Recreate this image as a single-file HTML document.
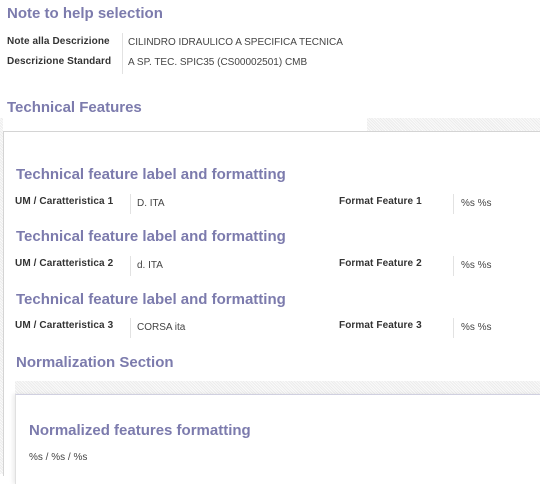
<!DOCTYPE html>
<html><head><style>
*{margin:0;padding:0;box-sizing:border-box}
body{width:540px;height:474px;overflow:hidden;background:#fff;font-family:"Liberation Sans",sans-serif;position:relative}
.a{position:absolute;white-space:nowrap}
.h1{font-size:15px;font-weight:bold;color:#7c7bad}
.h2{font-size:15px;font-weight:bold;color:#7c7bad}
.lb{font-size:10px;font-weight:bold;color:#333;letter-spacing:0.1px}
.v{font-size:10px;color:#444}
.sep{position:absolute;width:1px;background:#e2e2e2}
.pat{position:absolute;background:repeating-linear-gradient(45deg,#ececec 0 1px,#fafafa 1px 2px)}
</style></head><body>
<div class="a h1" style="left:7px;top:5px">Note to help selection</div>
<div class="a lb" style="left:7px;top:36px">Note alla Descrizione</div>
<div class="a lb" style="left:7px;top:56px">Descrizione Standard</div>
<div class="sep" style="left:122px;top:33px;height:41px"></div>
<div class="a v" style="left:128px;top:37px">CILINDRO IDRAULICO A SPECIFICA TECNICA</div>
<div class="a v" style="left:128px;top:57px">A SP. TEC. SPIC35 (CS00002501) CMB</div>
<div class="a h1" style="left:7px;top:99px">Technical Features</div>
<div class="pat" style="left:367px;top:118px;width:173px;height:13px"></div>
<div class="pat" style="left:0;top:118px;width:3px;height:356px"></div>
<div style="position:absolute;left:3px;top:131px;width:540px;height:345px;border-top:1px solid #d4d4d4;border-left:1px solid #d4d4d4"></div>

<div class="a h2" style="left:16px;top:166px">Technical feature label and formatting</div>
<div class="a lb" style="left:15px;top:196px">UM / Caratteristica 1</div>
<div class="sep" style="left:130px;top:194px;height:20px"></div>
<div class="a v" style="left:137px;top:198px">D. ITA</div>
<div class="a lb" style="left:339px;top:196px">Format Feature 1</div>
<div class="sep" style="left:453px;top:194px;height:20px"></div>
<div class="a v" style="left:461px;top:198px">%s %s</div>

<div class="a h2" style="left:16px;top:228px">Technical feature label and formatting</div>
<div class="a lb" style="left:15px;top:258px">UM / Caratteristica 2</div>
<div class="sep" style="left:130px;top:256px;height:20px"></div>
<div class="a v" style="left:137px;top:260px">d. ITA</div>
<div class="a lb" style="left:339px;top:258px">Format Feature 2</div>
<div class="sep" style="left:453px;top:256px;height:20px"></div>
<div class="a v" style="left:461px;top:260px">%s %s</div>

<div class="a h2" style="left:16px;top:291px">Technical feature label and formatting</div>
<div class="a lb" style="left:15px;top:320px">UM / Caratteristica 3</div>
<div class="sep" style="left:130px;top:318px;height:20px"></div>
<div class="a v" style="left:137px;top:322px">CORSA ita</div>
<div class="a lb" style="left:339px;top:320px">Format Feature 3</div>
<div class="sep" style="left:453px;top:318px;height:20px"></div>
<div class="a v" style="left:461px;top:322px">%s %s</div>

<div class="a h2" style="left:16px;top:354px">Normalization Section</div>
<div class="pat" style="left:15px;top:381px;width:525px;height:13px"></div>
<div style="position:absolute;left:15px;top:394px;width:530px;height:90px;border-top:1px solid #d0d0e0;border-left:1px solid #e0e0e0;box-shadow:-2px 0 4px rgba(0,0,0,0.08)"></div>
<div class="a h2" style="left:29px;top:422px">Normalized features formatting</div>
<div class="a v" style="left:29px;top:452px">%s / %s / %s</div>
</body></html>
